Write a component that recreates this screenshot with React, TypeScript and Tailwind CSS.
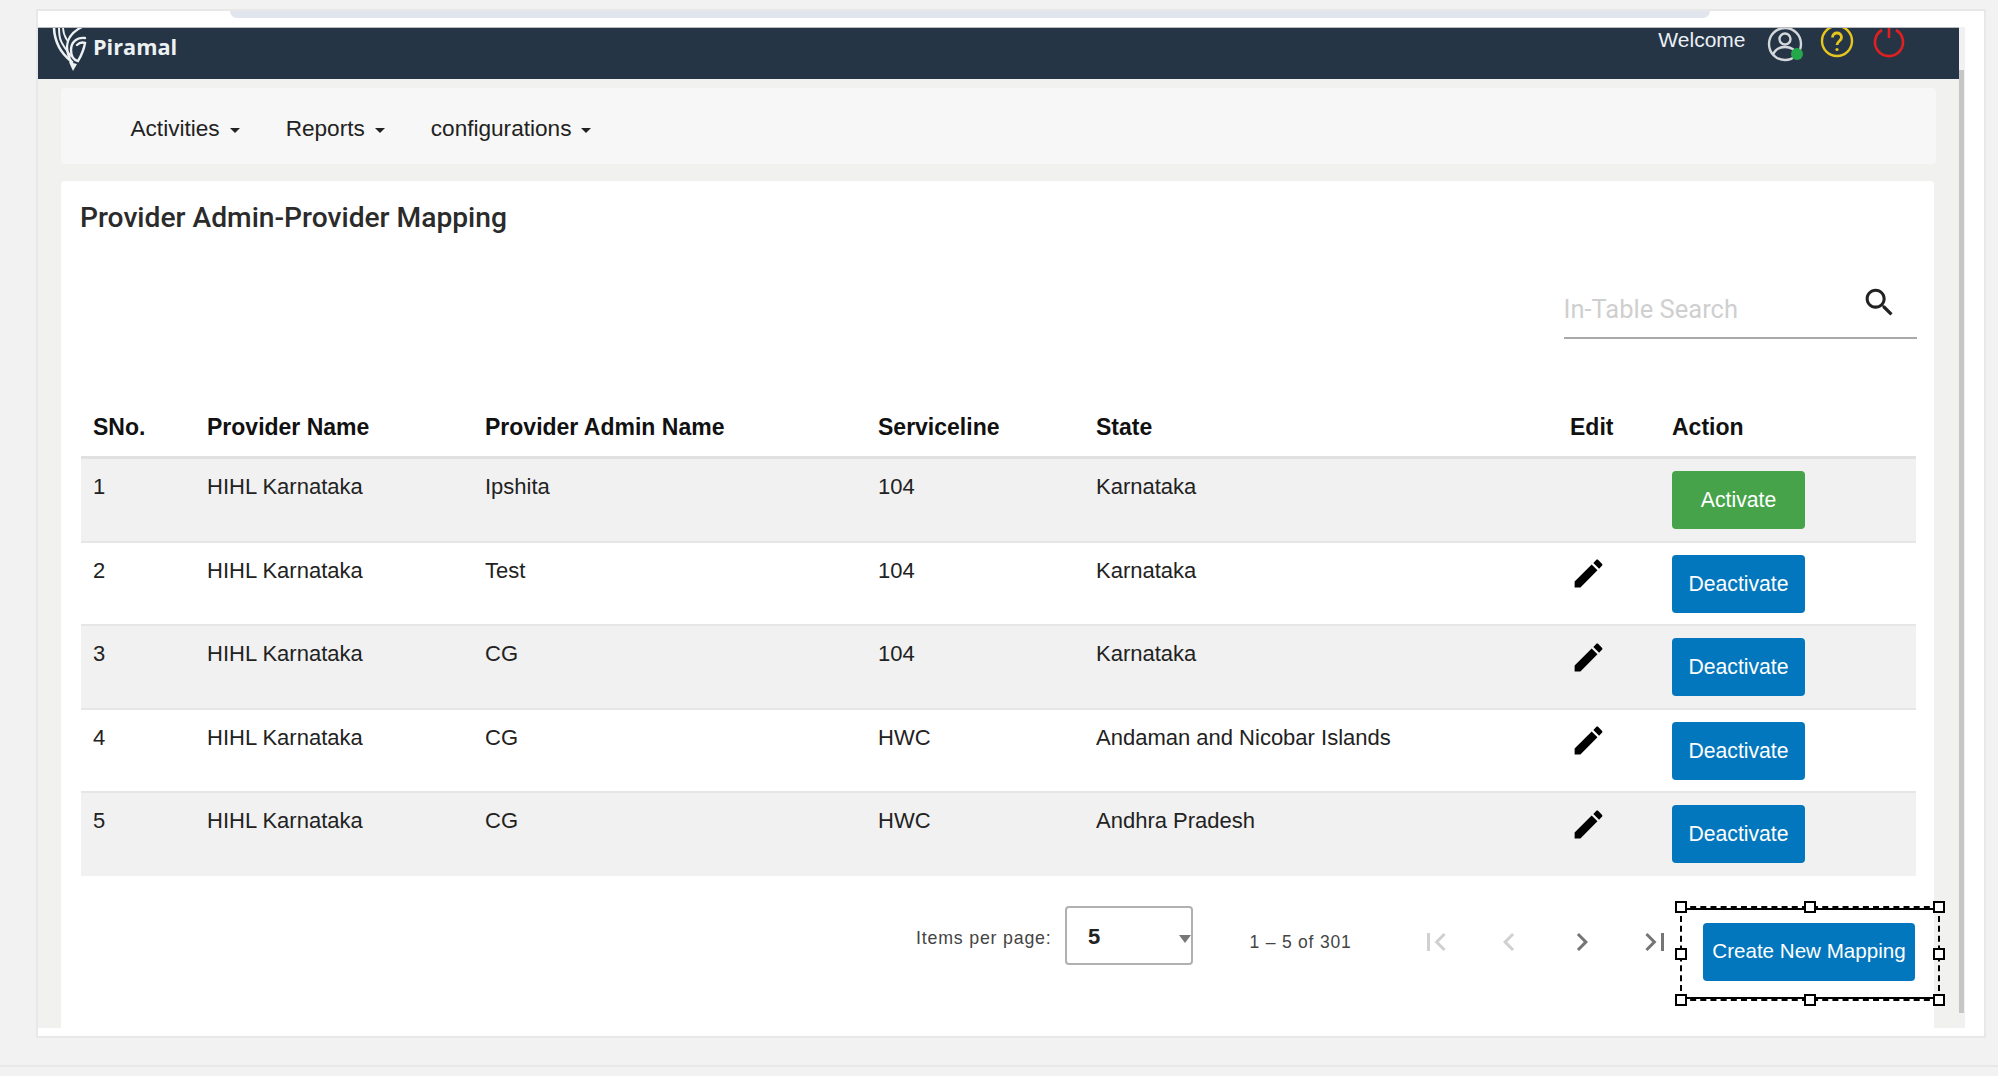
type Row = {
  sno: number;
  provider: string;
  admin: string;
  service: string;
  state: string;
  active: boolean;
};

const rows: Row[] = [
  { sno: 1, provider: "HIHL Karnataka", admin: "Ipshita", service: "104", state: "Karnataka", active: false },
  { sno: 2, provider: "HIHL Karnataka", admin: "Test", service: "104", state: "Karnataka", active: true },
  { sno: 3, provider: "HIHL Karnataka", admin: "CG", service: "104", state: "Karnataka", active: true },
  { sno: 4, provider: "HIHL Karnataka", admin: "CG", service: "HWC", state: "Andaman and Nicobar Islands", active: true },
  { sno: 5, provider: "HIHL Karnataka", admin: "CG", service: "HWC", state: "Andhra Pradesh", active: true },
];

const handles = [
  "left-[-7px] top-[-7px]",
  "left-[122px] top-[-7px]",
  "right-[-7px] top-[-7px]",
  "left-[-7px] top-[40px]",
  "right-[-7px] top-[40px]",
  "left-[-7px] bottom-[-7px]",
  "left-[122px] bottom-[-7px]",
  "right-[-7px] bottom-[-7px]",
];

const pagerIcons = [
  { d: "M18.41 16.59L13.82 12l4.59-4.59L17 6l-6 6 6 6zM6 6h2v12H6z", color: "text-[#d0d0d0]" },
  { d: "M15.41 7.41L14 6l-6 6 6 6 1.41-1.41L10.83 12z", color: "text-[#d0d0d0]" },
  { d: "M10 6L8.59 7.41 13.17 12l-4.58 4.59L10 18l6-6z", color: "text-[#757575]" },
  { d: "M5.59 7.41L10.18 12l-4.59 4.59L7 18l6-6-6-6zM16 6h2v12h-2z", color: "text-[#757575]" },
];

function Caret() {
  return <span className="ml-[10px] inline-block size-0 border-x-[5px] border-t-[5px] border-x-transparent border-t-[#222] align-middle" />;
}

function Logo() {
  return (
    <svg viewBox="0 0 36 46" className="h-[46px] w-[36px] shrink-0" fill="none" stroke="#eef1f3" strokeLinecap="round">
      <path d="M2 1c0 9 2 14 5 20 3 6 8 11 13 15" strokeWidth="2.6" />
      <path d="M7 1c0 6 0 10 2 14 2 5 6 10 10 15" strokeWidth="2" />
      <path d="M11 1c0 6 2 10 4 13" strokeWidth="1.8" />
      <path d="M30 1C20 6 15 13 15 21c0 8 4 14 6 20" strokeWidth="2.4" />
      <path d="M33 12c-8-1-14 4-14 12 0 6 3 10 7 11 3-5 6-12 7-18-3-1-6 0-8 2" strokeWidth="2.4" />
      <path d="M21 45l-4-9 8 2z" fill="#eef1f3" stroke="none" />
    </svg>
  );
}

function PencilIcon() {
  return (
    <svg viewBox="0 0 24 24" className="size-[37px] fill-black">
      <path d="M3 17.25V21h3.75L17.81 9.94l-3.75-3.75L3 17.25zM20.71 7.04c.39-.39.39-1.02 0-1.41l-2.34-2.34c-.39-.39-1.02-.39-1.41 0l-1.83 1.83 3.75 3.75 1.83-1.83z" />
    </svg>
  );
}

function HeaderIcons() {
  return (
    <div className="ml-[21px] flex h-[31px] items-start overflow-visible">
      <svg viewBox="0 0 38 34" className="h-[34px] w-[38px]" fill="none" stroke="#d5d8db" strokeWidth="2.4">
        <circle cx="18" cy="16" r="16" />
        <circle cx="18" cy="11" r="5.5" />
        <path d="M6 27c2-6 7-8 12-8s10 2 12 8" />
        <circle cx="30" cy="26" r="6" fill="#25a84a" stroke="none" />
      </svg>
      <svg viewBox="0 0 34 34" className="-mt-[2px] ml-[15px] size-[34px]" fill="none" stroke="#e6c61e" strokeWidth="2.4">
        <circle cx="17" cy="15" r="15" />
        <path d="M12.5 11.5c0-6 9-6 9 0 0 3.5-4.5 3.5-4.5 7.5" strokeWidth="2.8" />
        <circle cx="17" cy="23.5" r="1.6" fill="#e6c61e" stroke="none" />
      </svg>
      <svg viewBox="0 0 34 34" className="-mt-[2px] ml-[18px] size-[34px] overflow-visible" fill="none" stroke="#e02020" strokeWidth="2.6">
        <path d="M10 4a14 14 0 1 0 14 0" />
        <path d="M17 -3v15" />
      </svg>
    </div>
  );
}

export default function App() {
  return (
    <div className="h-[1076px] w-[1998px] overflow-hidden bg-[#f2f2f2] pl-[36px] pt-[9px] font-['Liberation_Sans',Arial,sans-serif] text-[#222]">
      <div className="h-[1029px] w-[1950px] border-2 border-[#e8e8e8] bg-white">
        <div className="h-[16px]">
          <div className="ml-[192px] h-[7px] w-[1480px] rounded-b-[14px] bg-[#e1e5ee]" />
        </div>
        <div className="flex">
          <div className="w-[1921px] shrink-0">
            <header className="flex h-[52px] items-start overflow-hidden border-t border-t-[#b8bcc0] bg-[#263545] pl-[14px]">
              <div className="flex items-start">
                <div className="-mt-[2px]">
                  <Logo />
                </div>
                <span className="ml-[5px] mt-[2px] font-['Open_Sans',sans-serif] text-[21.7px] font-bold leading-[34px] text-[#eef1f3]">
                  Piramal
                </span>
              </div>
              <div className="ml-auto flex items-start pr-[53.5px]">
                <span className="text-[21px] leading-[24px] text-[#eaf0f6]">Welcome</span>
                <HeaderIcons />
              </div>
            </header>
            <main className="h-[949px] bg-[#f1f1f0] pl-[23px] pr-[25px] pt-[9px]">
              <nav className="flex h-[76px] w-[1875px] items-center gap-[46px] rounded bg-[#f7f7f7] pl-[69.5px] pt-[6px] text-[22.6px]">
                <span>
                  Activities
                  <Caret />
                </span>
                <span>
                  Reports
                  <Caret />
                </span>
                <span>
                  configurations
                  <Caret />
                </span>
              </nav>
              <section className="relative mt-[17px] h-[855px] w-[1873px] rounded-t bg-white px-[19px] pt-[17px]">
                <h1 className="font-['Roboto',sans-serif] text-[28.2px] font-medium leading-[40px] text-[#2b2b2b]">
                  Provider Admin-Provider Mapping
                </h1>
                <div className="-mr-[1.5px] mt-[41px] flex justify-end">
                  <div className="flex h-[60px] w-[353px] items-start justify-between border-b-2 border-b-[#a9a9a9]">
                    <span className="mt-[14px] font-['Roboto',sans-serif] text-[25.5px] leading-[32px] text-[#cfcfcf]">
                      In-Table Search
                    </span>
                    <svg viewBox="0 0 24 24" className="mr-[18.5px] mt-[5px] size-[37px] fill-[#222]">
                      <path d="M15.5 14h-.79l-.28-.27C15.41 12.59 16 11.11 16 9.5 16 5.91 13.09 3 9.5 3S3 5.91 3 9.5 5.91 16 9.5 16c1.61 0 3.09-.59 4.23-1.57l.27.28v.79l5 4.99L20.49 19l-4.99-5zm-6 0C7.01 14 5 11.99 5 9.5S7.01 5 9.5 5 14 7.01 14 9.5 11.99 14 9.5 14z" />
                    </svg>
                  </div>
                </div>
                <table className="ml-[1px] mt-[57px] w-[1835px] table-fixed border-collapse text-left">
                  <colgroup>
                    <col className="w-[114px]" />
                    <col className="w-[278px]" />
                    <col className="w-[393px]" />
                    <col className="w-[218px]" />
                    <col className="w-[474px]" />
                    <col className="w-[102px]" />
                    <col />
                  </colgroup>
                  <thead>
                    <tr className="h-[61px] border-b-[3px] border-b-[#e0e0e0] text-[23px] font-bold text-[#111]">
                      <th className="px-[12px] pt-[3px] font-bold">SNo.</th>
                      <th className="px-[12px] pt-[3px] font-bold">Provider Name</th>
                      <th className="px-[12px] pt-[3px] font-bold">Provider Admin Name</th>
                      <th className="px-[12px] pt-[3px] font-bold">Serviceline</th>
                      <th className="px-[12px] pt-[3px] font-bold">State</th>
                      <th className="px-[12px] pt-[3px] font-bold">Edit</th>
                      <th className="px-[12px] pt-[3px] font-bold">Action</th>
                    </tr>
                  </thead>
                  <tbody className="text-[22px] leading-[28px]">
                    {rows.map((row) => (
                      <tr
                        key={row.sno}
                        className={`border-b-2 border-b-[#e6e6e6] align-top last:border-b-0 ${row.sno === 1 ? "h-[84.5px]" : "h-[83.5px]"} ${row.sno % 2 === 1 ? "bg-[#f1f1f1]" : "bg-white"}`}
                      >
                        <td className="px-[12px] pt-[14px]">{row.sno}</td>
                        <td className="px-[12px] pt-[14px]">{row.provider}</td>
                        <td className="px-[12px] pt-[14px]">{row.admin}</td>
                        <td className="px-[12px] pt-[14px]">{row.service}</td>
                        <td className="px-[12px] pt-[14px]">{row.state}</td>
                        <td className="pl-[12px] pt-[12.5px]">{row.active ? <PencilIcon /> : null}</td>
                        <td className="px-[12px] pt-[12px]">
                          <button
                            type="button"
                            className={`h-[58px] w-[133px] rounded text-[21.2px] text-white ${row.active ? "bg-[#0277bd]" : "bg-[#46a34a]"}`}
                          >
                            {row.active ? "Deactivate" : "Activate"}
                          </button>
                        </td>
                      </tr>
                    ))}
                  </tbody>
                </table>
                <div className="mt-[30px] flex items-start whitespace-nowrap">
                  <span className="ml-[836px] mt-[21px] w-[138px] shrink-0 text-[17.8px] leading-[22px] tracking-[0.8px] text-[#444]">
                    Items per page:
                  </span>
                  <div className="relative ml-[10.5px] h-[59px] w-[128px] shrink-0 rounded border-2 border-[#b0b0b0] pl-[21.5px] pt-[16px] text-[22px] font-bold leading-[26px]">
                    5
                    <span className="absolute right-[0px] top-[27px] size-0 border-x-[6px] border-t-[8px] border-x-transparent border-t-[#777]" />
                  </div>
                  <span className="ml-[57px] mt-[25px] w-[101px] shrink-0 text-[17.5px] leading-[22px] tracking-[0.8px] text-[#444]">
                    1 – 5 of 301
                  </span>
                  <div className="ml-[49px] mt-[18px] flex shrink-0">
                    {pagerIcons.map((icon) => (
                      <span key={icon.d} className={`flex w-[73px] justify-center ${icon.color}`}>
                        <svg viewBox="0 0 24 24" className="size-[36px] fill-current">
                          <path d={icon.d} />
                        </svg>
                      </span>
                    ))}
                  </div>
                  <button
                    type="button"
                    className="ml-[11.5px] mt-[17px] h-[58px] w-[212px] shrink-0 rounded bg-[#0277bd] text-[20.6px] text-white"
                  >
                    Create New Mapping
                  </button>
                </div>
                <div className="absolute left-[1619px] top-[725px] h-[95px] w-[260px] border-2 border-dashed border-black">
                  <div className="h-full w-full border-y-2 border-y-black" />
                  {handles.map((pos) => (
                    <span key={pos} className={`absolute size-[12px] border-2 border-black bg-white ${pos}`} />
                  ))}
                </div>
              </section>
            </main>
          </div>
          <div className="h-[1001px] w-[6px] shrink-0 bg-[#f1f1f1]">
            <div className="mt-[43px] h-[943px] w-[5px] bg-[#c6c6c6]" />
          </div>
        </div>
      </div>
      <div className="-ml-[36px] mt-[27px] h-[2px] w-[1998px] bg-[#e8e8e8]" />
    </div>
  );
}
